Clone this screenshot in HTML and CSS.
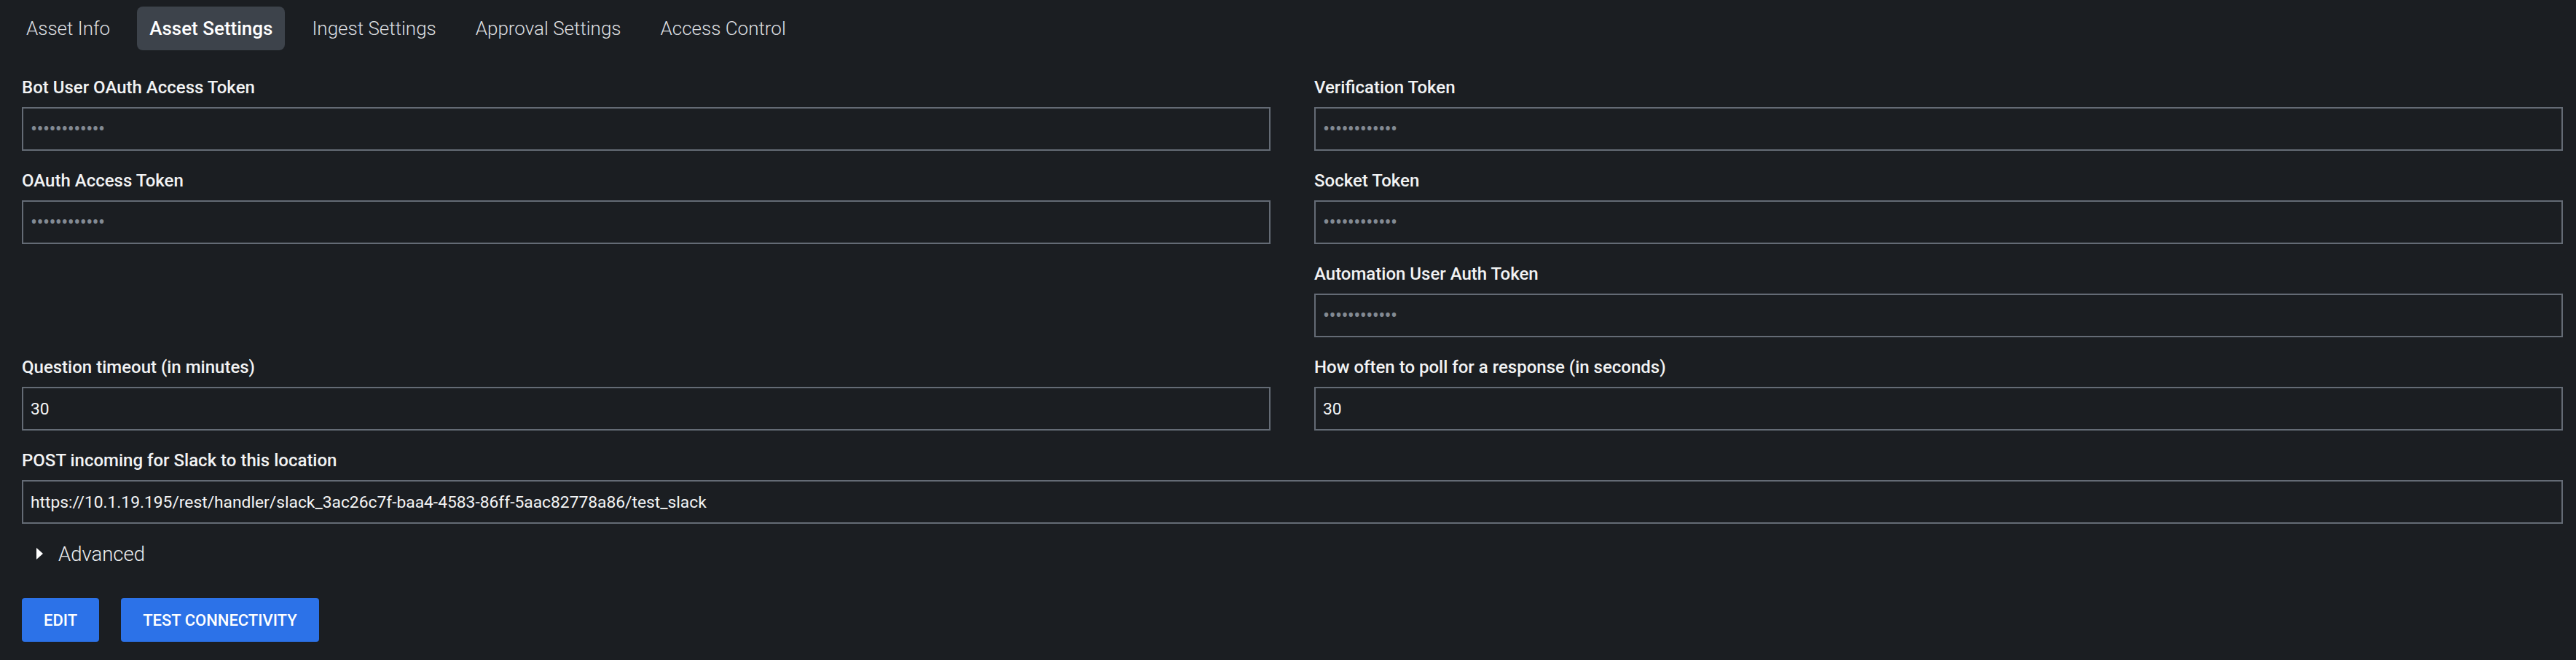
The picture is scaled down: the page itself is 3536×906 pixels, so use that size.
FILE: index.html
```html
<!DOCTYPE html>
<html lang="en">
<head>
<meta charset="utf-8">
<title>Asset Settings</title>
<link rel="stylesheet" href="styles.css">
</head>
<body>
<div class="page">
  <nav class="tabs">
    <div class="tab">Asset Info</div>
    <div class="tab active">Asset Settings</div>
    <div class="tab">Ingest Settings</div>
    <div class="tab">Approval Settings</div>
    <div class="tab">Access Control</div>
  </nav>

  <form class="form">
    <div class="field">
      <label class="label">Bot User OAuth Access Token</label>
      <div class="input secret">••••••••••••</div>
    </div>
    <div class="field">
      <label class="label">Verification Token</label>
      <div class="input secret">••••••••••••</div>
    </div>
    <div class="field">
      <label class="label">OAuth Access Token</label>
      <div class="input secret">••••••••••••</div>
    </div>
    <div class="field">
      <label class="label">Socket Token</label>
      <div class="input secret">••••••••••••</div>
    </div>
    <div class="field col2">
      <label class="label">Automation User Auth Token</label>
      <div class="input secret">••••••••••••</div>
    </div>
    <div class="field">
      <label class="label">Question timeout (in minutes)</label>
      <div class="input">30</div>
    </div>
    <div class="field">
      <label class="label">How often to poll for a response (in seconds)</label>
      <div class="input">30</div>
    </div>
    <div class="field full">
      <label class="label">POST incoming for Slack to this location</label>
      <div class="input">https://10.1.19.195/rest/handler/slack_3ac26c7f-baa4-4583-86ff-5aac82778a86/test_slack</div>
    </div>
  </form>

  <div class="advanced">
    <svg class="caret" width="9" height="16" viewBox="0 0 9 16"><path d="M0 0 L9 8 L0 16 Z" fill="#ffffff"/></svg>
    <span>Advanced</span>
  </div>

  <div class="actions">
    <button class="btn">Edit</button>
    <button class="btn">Test Connectivity</button>
  </div>
</div>
</body>
</html>
```

FILE: styles.css
```css
* { box-sizing: border-box; }

html, body {
  margin: 0;
  padding: 0;
  background: #1b1e22;
}

body {
  font-family: Roboto, "Liberation Sans", sans-serif;
  color: #f2f3f4;
  width: 3536px;
  height: 906px;
  overflow: hidden;
}

.page {
  padding: 9px 18px 0 30px;
}

.tabs {
  display: flex;
  gap: 20px;
  margin-left: -11px;
  height: 60px;
}

.tab {
  display: flex;
  align-items: center;
  height: 60px;
  padding: 0 17px;
  border-radius: 8px;
  font-size: 26px;
  font-weight: 300;
  color: #dcdee0;
}

.tab.active {
  background: #3d434b;
  font-weight: 500;
  color: #ffffff;
}

.form {
  margin-top: 33px;
  display: grid;
  grid-template-columns: 1fr 1fr;
  column-gap: 60px;
}

.field {
  display: flex;
  flex-direction: column;
  margin-bottom: 23px;
}

.field.col2 { grid-column: 2; }
.field.full { grid-column: 1 / -1; }

.label {
  font-size: 24px;
  font-weight: 500;
  line-height: 36px;
  height: 36px;
  margin-bottom: 9px;
  color: #f2f3f4;
}

.input {
  height: 60px;
  border: 2px solid #646b75;
  padding: 0 10px;
  display: flex;
  align-items: center;
  font-size: 22.8px;
  color: #f4f5f6;
  white-space: nowrap;
}

.input.secret {
  font-size: 27px;
  letter-spacing: -0.65px;
  color: #838a93;
  padding-left: 10px;
}

.advanced {
  display: flex;
  align-items: center;
  height: 36px;
  padding-left: 20px;
  font-size: 27.5px;
  font-weight: 300;
  color: #eceef0;
}

.caret {
  margin-right: 21px;
}

.actions {
  margin-top: 43px;
  display: flex;
  gap: 30px;
}

.btn {
  height: 60px;
  padding: 0 30px;
  border: none;
  border-radius: 4px;
  background: #2c72e8;
  color: #ffffff;
  font-family: Roboto, "Liberation Sans", sans-serif;
  font-size: 22px;
  font-weight: 500;
  text-transform: uppercase;
}
```
